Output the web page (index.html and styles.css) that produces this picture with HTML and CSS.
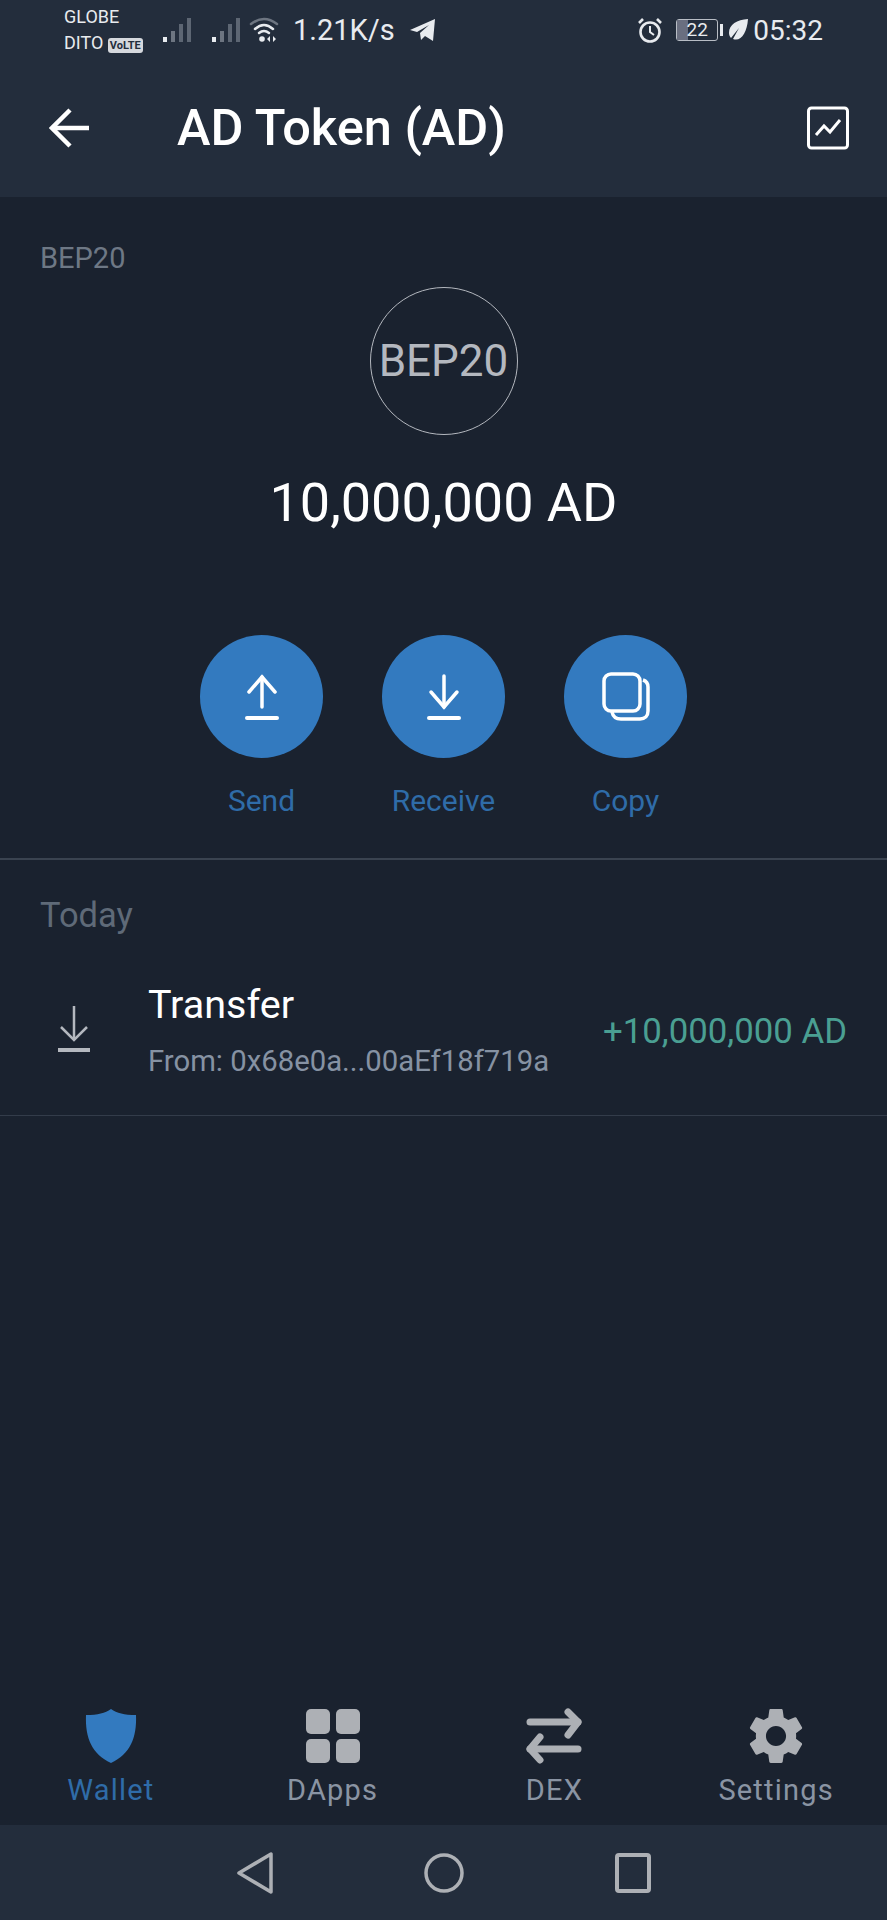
FILE: index.html
```html
<!DOCTYPE html>
<html lang="en">
<head>
    <meta charset="UTF-8">
    <meta name="viewport" content="width=device-width, initial-scale=1.0">
    <title>AD Token (AD)</title>
    <link rel="stylesheet" href="styles.css">
</head>
<body>
    <div class="app">
        <header class="header">
            <div class="status-bar">
                <div class="carrier">
                    <span>GLOBE</span>
                    <span>DITO <b class="volte">VoLTE</b></span>
                </div>
                <svg class="signal" width="29" height="26" viewBox="0 0 29 26">
                    <rect x="0" y="20" width="4" height="5" fill="#e8ebef"/>
                    <rect x="8" y="14" width="4" height="11" fill="#6d7581"/>
                    <rect x="16" y="7" width="4" height="18" fill="#5d6673"/>
                    <rect x="24" y="1" width="4" height="24" fill="#5d6673"/>
                </svg>
                <svg class="signal second" width="29" height="26" viewBox="0 0 29 26">
                    <rect x="0" y="20" width="4" height="5" fill="#e8ebef"/>
                    <rect x="8" y="14" width="4" height="11" fill="#6d7581"/>
                    <rect x="16" y="7" width="4" height="18" fill="#5d6673"/>
                    <rect x="24" y="1" width="4" height="24" fill="#5d6673"/>
                </svg>
                <svg class="wifi" width="30" height="26" viewBox="0 0 30 26" fill="none" stroke-linecap="round">
                    <path d="M2 7 Q15 -3 28 7" stroke="#6d7581" stroke-width="2.5"/>
                    <path d="M6 12 Q15 4 24 12" stroke="#e8ebef" stroke-width="2.5"/>
                    <path d="M10 16 Q15 12 20 16" stroke="#e8ebef" stroke-width="2.5"/>
                    <circle cx="13" cy="22" r="2.8" fill="#e8ebef"/>
                    <path d="M21 19v6l-3-3zM24 19v6l3-3z" fill="#e8ebef"/>
                </svg>
                <span class="speed">1.21K/s</span>
                <svg class="telegram" width="26" height="24" viewBox="0 0 26 24">
                    <path d="M0 12 L25 1 L23 23 L15 18 L11 22 L10 15 L19 7 L7 14z" fill="#e8ebef"/>
                </svg>
                <div class="status-right">
                    <svg width="26" height="26" viewBox="0 0 26 26" fill="none" stroke="#e8ebef">
                        <circle cx="13" cy="15" r="9.5" stroke-width="2.6"/>
                        <path d="M13 9v6l4 3" stroke-width="2"/>
                        <path d="M2 6l4-4M24 6l-4-4" stroke-width="2.6"/>
                    </svg>
                    <div class="battery">
                        <div class="battery-body"><span class="battery-level"></span><span class="battery-text">22</span></div>
                        <span class="battery-tip"></span>
                    </div>
                    <svg class="leaf" width="19" height="22" viewBox="0 0 19 22">
                        <path d="M19 0 C8 1 0 5 0 14 C0 16 1 18 2 19 L10 9 L4 20 C12 23 18 14 19 0z" fill="#e8ebef"/>
                    </svg>
                    <span class="time">05:32</span>
                </div>
            </div>
            <div class="toolbar">
                <svg class="back-arrow" width="40" height="40" viewBox="0 0 40 40" fill="none" stroke="#fff" stroke-width="4.5">
                    <path d="M40 20H3"/>
                    <path d="M21 2L3 20l18 18"/>
                </svg>
                <h1>AD Token (AD)</h1>
                <svg class="chart" width="42" height="44" viewBox="0 0 42 44" fill="none" stroke="#fff">
                    <rect x="1.5" y="2" width="39" height="40" rx="3" stroke-width="3"/>
                    <path d="M9 29l8-9 6 6 10-12" stroke-width="3"/>
                </svg>
            </div>
        </header>

        <main class="main">
            <section class="token">
                <div class="network">BEP20</div>
                <div class="token-logo">BEP20</div>
                <div class="balance">10,000,000 AD</div>
                <div class="actions">
                    <div class="action">
                        <div class="action-btn">
                            <svg width="46" height="46" viewBox="0 0 46 46" fill="none" stroke="#fff" stroke-width="3.5" stroke-linecap="round">
                                <path d="M23 33V3"/>
                                <path d="M10 18L23 3l13 15"/>
                                <path d="M8 44h30" stroke-width="4"/>
                            </svg>
                        </div>
                        <span>Send</span>
                    </div>
                    <div class="action">
                        <div class="action-btn">
                            <svg width="46" height="46" viewBox="0 0 46 46" fill="none" stroke="#fff" stroke-width="3.5" stroke-linecap="round">
                                <path d="M23 2v31"/>
                                <path d="M10 18l13 15 13-15"/>
                                <path d="M8 44h30" stroke-width="4"/>
                            </svg>
                        </div>
                        <span>Receive</span>
                    </div>
                    <div class="action">
                        <div class="action-btn">
                            <svg width="50" height="50" viewBox="0 0 50 50" fill="none" stroke="#fff" stroke-width="3.5">
                                <rect x="3" y="2" width="36" height="37" rx="7"/>
                                <path d="M42 8c3 1 5 3 5 7v24c0 5-3 8-8 8H20c-5 0-8-2-9-7"/>
                            </svg>
                        </div>
                        <span>Copy</span>
                    </div>
                </div>
            </section>

            <section class="history">
                <div class="history-date">Today</div>
                <div class="tx-row">
                    <svg class="tx-icon" width="32" height="46" viewBox="0 0 32 46" fill="none" stroke="#b4b8bf">
                        <path d="M16 0v34" stroke-width="2.5"/>
                        <path d="M3 21l13 13 13-13" stroke-width="2.5"/>
                        <path d="M0 44h32" stroke-width="4"/>
                    </svg>
                    <div class="tx-info">
                        <div class="tx-title">Transfer</div>
                        <div class="tx-from">From: 0x68e0a...00aEf18f719a</div>
                    </div>
                    <div class="tx-amount">+10,000,000 AD</div>
                </div>
            </section>
        </main>

        <nav class="tabs">
            <div class="tab active">
                <svg width="56" height="56" viewBox="0 0 56 56">
                    <path d="M28 1 C34 5 41 7 53 7 C54 30 47 46 28 55 C9 46 2 30 3 7 C15 7 22 5 28 1z" fill="#337abf"/>
                </svg>
                <span>Wallet</span>
            </div>
            <div class="tab">
                <svg width="56" height="56" viewBox="0 0 56 56" fill="#adb0b5">
                    <rect x="1" y="1" width="24" height="25" rx="5"/>
                    <rect x="31" y="1" width="24" height="25" rx="5"/>
                    <rect x="1" y="31" width="24" height="24" rx="5"/>
                    <rect x="31" y="31" width="24" height="24" rx="5"/>
                </svg>
                <span>DApps</span>
            </div>
            <div class="tab">
                <svg width="58" height="56" viewBox="0 0 58 56" fill="none" stroke="#adb0b5" stroke-width="7" stroke-linecap="round" stroke-linejoin="round">
                    <path d="M5 14h48"/>
                    <path d="M43 4l10 10-10 13"/>
                    <path d="M53 41H5"/>
                    <path d="M15 29L5 41l10 11"/>
                </svg>
                <span>DEX</span>
            </div>
            <div class="tab">
                <svg width="56" height="56" viewBox="2.4 2 19.2 20">
                    <path fill="#adb0b5" d="M19.14 12.94c.04-.3.06-.61.06-.94 0-.32-.02-.64-.07-.94l2.03-1.58c.18-.14.23-.41.12-.61l-1.92-3.32c-.12-.22-.37-.29-.59-.22l-2.39.96c-.5-.38-1.03-.7-1.62-.94l-.36-2.54c-.04-.24-.24-.41-.48-.41h-3.84c-.24 0-.43.17-.47.41l-.36 2.54c-.59.24-1.13.57-1.62.94l-2.39-.96c-.22-.08-.47 0-.59.22L2.74 8.87c-.12.21-.08.47.12.61l2.03 1.58c-.05.3-.09.63-.09.94s.02.64.07.94l-2.03 1.58c-.18.14-.23.41-.12.61l1.92 3.32c.12.22.37.29.59.22l2.39-.96c.5.38 1.03.7 1.62.94l.36 2.54c.05.24.24.41.48.41h3.84c.24 0 .44-.17.47-.41l.36-2.54c.59-.24 1.13-.56 1.62-.94l2.39.96c.22.08.47 0 .59-.22l1.92-3.32c.12-.22.07-.47-.12-.61l-2.01-1.58zM12 15.6c-1.98 0-3.6-1.62-3.6-3.6s1.62-3.6 3.6-3.6 3.6 1.62 3.6 3.6-1.62 3.6-3.6 3.6z"/>
                </svg>
                <span>Settings</span>
            </div>
        </nav>

        <div class="system-nav">
            <svg width="36" height="42" viewBox="0 0 36 42" fill="none" stroke="#adb0b5" stroke-width="3.5" stroke-linejoin="round">
                <path d="M34 2v38L2 21z"/>
            </svg>
            <svg width="40" height="42" viewBox="0 0 40 42" fill="none" stroke="#adb0b5" stroke-width="3.5">
                <circle cx="20" cy="21" r="18"/>
            </svg>
            <svg width="36" height="40" viewBox="0 0 36 40" fill="none" stroke="#adb0b5" stroke-width="4">
                <rect x="2" y="2" width="32" height="36" rx="2"/>
            </svg>
        </div>
    </div>
</body>
</html>
```

FILE: styles.css
```css
* {
    margin: 0;
    padding: 0;
    box-sizing: border-box;
}

body {
    font-family: Roboto, "Liberation Sans", sans-serif;
    background: #1a222f;
    color: #fff;
}

svg {
    display: block;
    flex-shrink: 0;
}

.app {
    display: flex;
    flex-direction: column;
    height: 1920px;
    overflow: hidden;
}

.header {
    background: #232d3c;
    height: 197px;
}

.status-bar {
    display: flex;
    align-items: center;
    height: 60px;
    padding: 0 64px;
    color: #e8ebef;
}

.carrier {
    display: flex;
    flex-direction: column;
    width: 99px;
    font-size: 18px;
    line-height: 26px;
    white-space: nowrap;
    margin-top: 2px;
}

.volte {
    background: #d5d8dd;
    color: #232d3c;
    font-size: 11px;
    padding: 1px 2px;
    border-radius: 3px;
}

.signal.second {
    margin-left: 20px;
}

.wifi {
    margin-left: 8px;
}

.speed {
    margin-left: 14px;
    font-size: 29px;
    white-space: nowrap;
}

.telegram {
    margin-left: 15px;
}

.status-right {
    display: flex;
    align-items: center;
    margin-left: auto;
}

.battery {
    display: flex;
    align-items: center;
    gap: 2px;
    margin-left: 13px;
}

.battery-body {
    position: relative;
    width: 42px;
    height: 22px;
    border: 1.5px solid #b8bdc5;
    border-radius: 3px;
    text-align: center;
    font-size: 19px;
    line-height: 19px;
}

.battery-level {
    position: absolute;
    left: 0;
    top: 0;
    bottom: 0;
    width: 11px;
    background: #6a6f80;
}

.battery-text {
    position: relative;
}

.battery-tip {
    width: 3px;
    height: 12px;
    background: #e8ebef;
}

.leaf {
    margin-left: 6px;
}

.time {
    margin-left: 5px;
    font-size: 28px;
}

.toolbar {
    display: flex;
    align-items: center;
    height: 137px;
    padding: 0 38px 0 49px;
    margin-top: -1px;
}

.toolbar h1 {
    margin-left: 88px;
    font-size: 50.5px;
    font-weight: 500;
    white-space: nowrap;
}

.chart {
    margin-left: auto;
}

.main {
    flex: 1;
}

.token {
    display: flex;
    flex-direction: column;
    align-items: center;
    padding-top: 44px;
    padding-bottom: 39px;
    border-bottom: 2px solid #3a4350;
}

.network {
    align-self: flex-start;
    margin-left: 40px;
    font-size: 29px;
    line-height: 34px;
    color: #6e7885;
}

.token-logo {
    display: flex;
    align-items: center;
    justify-content: center;
    width: 148px;
    height: 148px;
    margin-top: 12px;
    border: 1.5px solid #b4b8bf;
    border-radius: 50%;
    font-size: 44px;
    color: #b4b8bf;
}

.balance {
    margin-top: 38px;
    font-size: 54px;
    line-height: 60px;
}

.actions {
    display: flex;
    margin-top: 102px;
}

.action {
    display: flex;
    flex-direction: column;
    align-items: center;
    width: 182px;
    font-size: 30px;
    line-height: 36px;
    color: #2f6ca8;
}

.action-btn {
    display: flex;
    align-items: center;
    justify-content: center;
    width: 123px;
    height: 123px;
    margin-bottom: 25px;
    border-radius: 50%;
    background: #337abf;
}

.history-date {
    height: 86px;
    padding: 36px 40px 0;
    font-size: 34.5px;
    line-height: 38px;
    color: #5f6a78;
}

.tx-row {
    display: flex;
    align-items: center;
    height: 170px;
    padding: 0 40px 0 58px;
    border-bottom: 1px solid #333c4a;
}

.tx-icon {
    margin-bottom: 4px;
}

.tx-info {
    margin-left: 58px;
}

.tx-title {
    font-size: 39.5px;
    line-height: 48px;
}

.tx-from {
    margin-top: 12px;
    font-size: 29.3px;
    line-height: 40px;
    color: #8692a3;
}

.tx-amount {
    margin-left: auto;
    font-size: 34.8px;
    color: #4a9f92;
}

.tabs {
    display: grid;
    grid-template-columns: repeat(4, 1fr);
    height: 125px;
    padding-top: 8px;
}

.tab {
    display: flex;
    flex-direction: column;
    align-items: center;
    gap: 8px;
    font-size: 29px;
    line-height: 36px;
    letter-spacing: 1.2px;
    color: #8a94a3;
}

.tab.active {
    color: #2f6ca8;
}

.system-nav {
    display: flex;
    align-items: center;
    justify-content: center;
    gap: 151px;
    height: 95px;
    background: #232d3c;
}
```
